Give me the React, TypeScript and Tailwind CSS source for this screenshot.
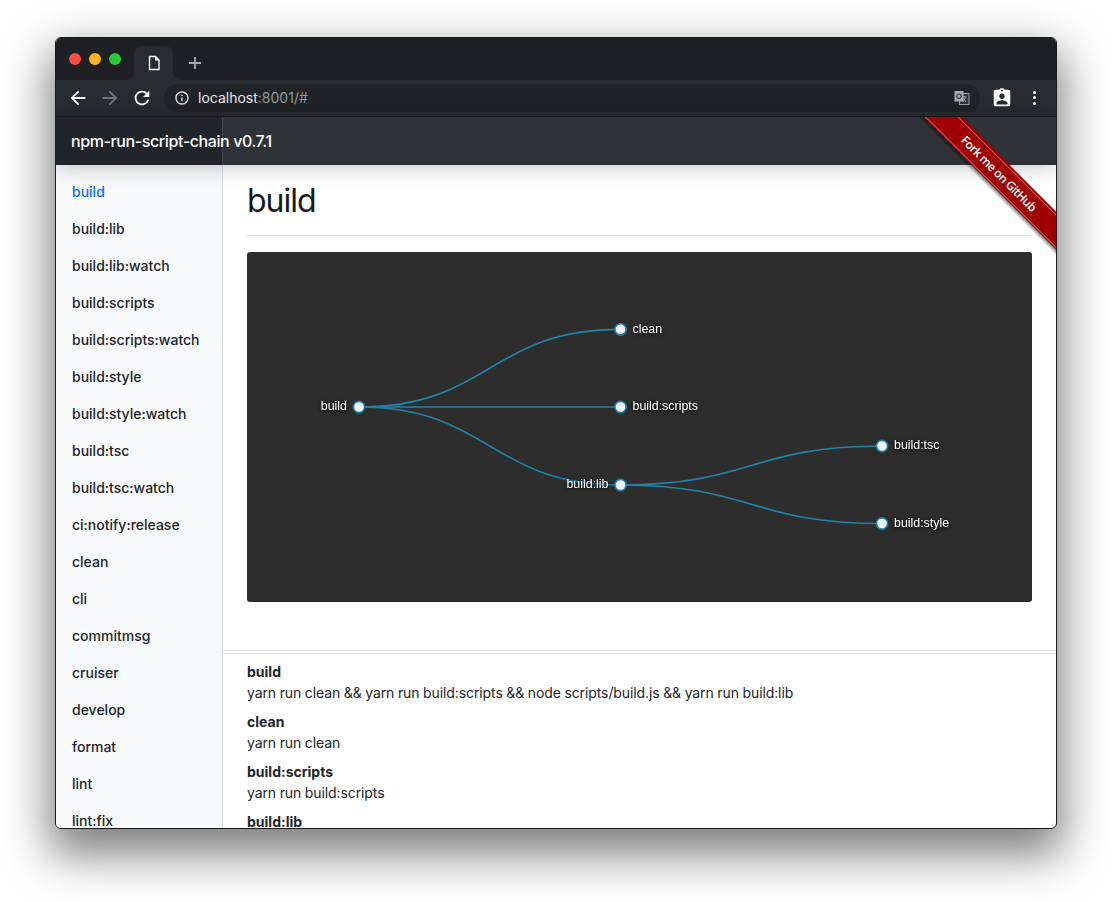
import React from "react";

const sidebarItems = [
  "build","build:lib","build:lib:watch","build:scripts","build:scripts:watch","build:style","build:style:watch",
  "build:tsc","build:tsc:watch","ci:notify:release","clean","cli","commitmsg","cruiser","develop","format","lint","lint:fix",
];

const scripts = [
  ["build", "yarn run clean && yarn run build:scripts && node scripts/build.js && yarn run build:lib"],
  ["clean", "yarn run clean"],
  ["build:scripts", "yarn run build:scripts"],
  ["build:lib", "yarn run build:lib"],
];

const link = (x0: number, y0: number, x1: number, y1: number) => {
  const m = (x0 + x1) / 2;
  return `M${x0} ${y0}C${m} ${y0} ${m} ${y1} ${x1} ${y1}`;
};

const nodes: [number, number, string, boolean][] = [
  [112, 155, "build", true],
  [373.5, 77.4, "clean", false],
  [373.5, 155, "build:scripts", false],
  [373.5, 233, "build:lib", true],
  [635, 194, "build:tsc", false],
  [635, 271.5, "build:style", false],
];

const links = [[0, 1], [0, 2], [0, 3], [3, 4], [3, 5]];

function Graph() {
  return (
    <svg width="785" height="350" viewBox="0 0 785 350" className="block">
      {links.map(([a, b]) => (
        <path key={`${a}-${b}`} d={link(nodes[a][0], nodes[a][1], nodes[b][0], nodes[b][1])} fill="none" stroke="#1f83a8" strokeWidth="1.6" />
      ))}
      {nodes.map(([x, y]) => (
        <circle key={`${x}-${y}`} cx={x} cy={y} r="5.6" fill="#f2f3ff" stroke="#1f83a8" strokeWidth="1.6" />
      ))}
      <g className="[filter:drop-shadow(0_1px_2px_rgba(0,0,0,0.95))]">
        {nodes.map(([x, y, label, left]) => (
          <text
            key={label}
            x={left ? x - 12 : x + 12}
            y={y + 3.2}
            textAnchor={left ? "end" : "start"}
            fill="#ffffff"
            fontSize="12.4"
            fontFamily="'Liberation Sans', Arial, sans-serif"
          >
            {label}
          </text>
        ))}
      </g>
    </svg>
  );
}

function Material({ d, size = 24, color = "#fff" }: { d: string; size?: number; color?: string }) {
  return (
    <svg width={size} height={size} viewBox="0 0 24 24" fill={color} className="block shrink-0">
      <path d={d} />
    </svg>
  );
}

function TitleBar() {
  return (
    <div className="flex h-[42px] shrink-0 items-end bg-[#1f2024]">
      <div className="flex h-[42px] w-[78px] shrink-0 items-start gap-[8px] pl-[13px] pt-[15px]">
        <span className="h-[12px] w-[12px] rounded-full bg-[#fb4b4b]" />
        <span className="h-[12px] w-[12px] rounded-full bg-[#fdb024]" />
        <span className="h-[12px] w-[12px] rounded-full bg-[#2ac83f]" />
      </div>
      <div className="relative flex h-[34px] w-[39px] items-center justify-center rounded-t-[8px] bg-[#292c2f]">
        <svg width="14" height="16" viewBox="0 0 14 16" className="block">
          <path d="M2.5 1.5h6l3.5 3.5v9.500h-9.500z" fill="none" stroke="#fff" strokeWidth="1.300" />
          <path d="M8 1.500v4h4z" fill="#fff" />
        </svg>
        <svg width="8" height="8" viewBox="0 0 8 8" className="absolute bottom-0 left-[-8px]">
          <path d="M8 0v8H0c4.500 0 8-3.500 8-8z" fill="#292c2f" />
        </svg>
        <svg width="8" height="8" viewBox="0 0 8 8" className="absolute bottom-0 right-[-8px]">
          <path d="M0 0v8h8C3.500 8 0 4.500 0 0z" fill="#292c2f" />
        </svg>
      </div>
      <div className="flex h-[34px] w-[44px] items-center justify-center">
        <svg width="12" height="12" viewBox="0 0 12 12" className="block">
          <path d="M6 0v12M0 6h12" stroke="#a8a9ab" strokeWidth="1.800" />
        </svg>
      </div>
    </div>
  );
}

function Toolbar() {
  return (
    <div className="flex h-[37px] shrink-0 items-center border-b border-[#1d1f22] bg-[#292c2f] pb-px">
      <div className="flex w-[108px] shrink-0 items-center pl-[11px]">
        <div className="w-[32px]">
          <Material size={22} d="M20 11H7.830l5.590-5.590L12 4l-8 8 8 8 1.410-1.410L7.830 13H20v-2z" />
        </div>
        <div className="w-[32px]">
          <Material size={22} color="#75777a" d="M12 4l-1.410 1.410L16.170 11H4v2h12.170l-5.580 5.590L12 20l8-8z" />
        </div>
        <div className="w-[32px]">
          <Material size={22} d="M17.650 6.350C16.200 4.900 14.210 4 12 4c-4.420 0-7.990 3.580-7.990 8s3.570 8 7.990 8c3.730 0 6.840-2.550 7.730-6h-2.080c-.820 2.330-3.040 4-5.650 4-3.310 0-6-2.690-6-6s2.690-6 6-6c1.660 0 3.140.690 4.220 1.780L13 11h7V4l-2.350 2.350z" />
        </div>
      </div>
      <div className="flex h-[28px] w-[816px] shrink-0 items-center rounded-full bg-[#212427] pl-[10px] pr-[10px]">
        <Material size={16} color="#e8e8e8" d="M11 7h2v2h-2zm0 4h2v6h-2zm1-9C6.480 2 2 6.480 2 12s4.480 10 10 10 10-4.480 10-10S17.520 2 12 2zm0 18c-4.410 0-8-3.590-8-8s3.590-8 8-8 8 3.590 8 8-3.590 8-8 8z" />
        <span className="ml-[8px] flex-1 text-[14px] text-[#e8eaed]">
          localhost<span className="text-[#94979b]">:8001/#</span>
        </span>
        <svg width="16" height="16" viewBox="0 0 16 16" className="block shrink-0">
          <rect x="5.500" y="3.500" width="9.500" height="11" fill="#33363a" stroke="#9b9d9f" />
          <path d="M8.500 7h4M10.500 6v1M9 12l3-5M9 8l3 4" stroke="#a8aaac" strokeWidth="0.900" fill="none" />
          <rect x="0.500" y="1" width="9" height="10.500" fill="#a8aaac" />
          <circle cx="5" cy="6.200" r="2.200" fill="none" stroke="#33363a" strokeWidth="1.100" />
        </svg>
      </div>
      <div className="ml-[11px] w-[22px] shrink-0">
        <Material size={22} d="M19 3h-4.180C14.400 1.840 13.300 1 12 1c-1.300 0-2.400.840-2.820 2H5c-1.100 0-2 .900-2 2v14c0 1.100.900 2 2 2h14c1.100 0 2-.900 2-2V5c0-1.100-.900-2-2-2zm-7 0c.550 0 1 .450 1 1s-.450 1-1 1-1-.450-1-1 .450-1 1-1zm0 4c1.660 0 3 1.340 3 3s-1.340 3-3 3-3-1.340-3-3 1.340-3 3-3zm6 12H6v-1.400c0-2 4-3.100 6-3.100s6 1.100 6 3.100V19z" />
      </div>
      <div className="ml-[20px] flex flex-col gap-[2.5px]">
        <span className="h-[3px] w-[3px] rounded-full bg-white" />
        <span className="h-[3px] w-[3px] rounded-full bg-white" />
        <span className="h-[3px] w-[3px] rounded-full bg-white" />
      </div>
    </div>
  );
}

function Ribbon() {
  return (
    <div className="pointer-events-none absolute right-0 top-[79px] z-30 h-[140px] w-[140px] overflow-hidden">
      <div className="absolute left-[-37px] top-[43px] flex h-[27px] w-[240px] rotate-45 items-center bg-[#a00000] shadow-[0_2px_3px_rgba(0,0,0,0.5)]">
        <div className="flex h-[24px] w-full items-center justify-center border-y border-[#c25a5a] text-[12px] font-semibold tracking-[-0.5px] text-white [font-family:'Open_Sans',sans-serif]">
          Fork me on GitHub
        </div>
      </div>
    </div>
  );
}

export default function App() {
  return (
    <div className="h-[902px] w-[1112px] overflow-hidden bg-white pl-[55px] pt-[37px] [font-family:Inter,'Noto_Sans',sans-serif]">
      <div className="relative flex h-[792px] w-[1002px] flex-col overflow-hidden rounded-[6px] border border-[#17181a] bg-white shadow-[0_20px_45px_6px_rgba(0,0,0,0.5)]">
        <TitleBar />
        <Toolbar />
        <div className="relative z-20 flex h-[48px] shrink-0 shadow-[0_0_22px_rgba(0,0,0,0.28)]">
          <div className="w-[167px] shrink-0 border-r border-[#3f4347] bg-[#212428]" />
          <div className="flex-1 bg-[#2f3337]" />
          <div className="absolute inset-y-0 left-[15px] flex items-center whitespace-nowrap text-[16px] font-medium tracking-[-0.4px] text-white">
            npm-run-script-chain v0.7.1
          </div>
        </div>
        <div className="flex min-h-0 flex-1">
          <nav className="w-[167px] shrink-0 overflow-hidden border-r border-[#dee2e6] bg-[#f8f9fa] pt-[8px] text-[14px] font-[450] text-[#212529]">
            {sidebarItems.map((item, i) => (
              <div key={item} className={`flex h-[37px] items-center px-4 ${i === 0 ? "text-[#0a6cff]" : ""}`}>
                {item}
              </div>
            ))}
          </nav>
          <main className="min-w-0 flex-1 overflow-hidden text-[14px] text-[#212529]">
            <div className="px-6 pt-[17px]">
              <h1 className="text-[32px] leading-[38px] font-normal tracking-[-1px] text-[#16181a]">build</h1>
              <div className="mt-[15px] border-t border-[#dee2e6]" />
              <div className="mt-[16px] h-[350px] w-[785px] overflow-hidden rounded-[3px] bg-[#2d2d2d]">
                <Graph />
              </div>
            </div>
            <div className="mt-[48px] h-[4px] border-y border-[#dee2e6]" />
            <div className="flex flex-col gap-2 px-6 pt-[7px]">
              {scripts.map(([name, cmd]) => (
                <div key={name} className="leading-[21px]">
                  <div className="font-bold">{name}</div>
                  <div className="tracking-[-0.1px] [word-spacing:-0.2px]">{cmd}</div>
                </div>
              ))}
            </div>
          </main>
        </div>
        <Ribbon />
      </div>
    </div>
  );
}
